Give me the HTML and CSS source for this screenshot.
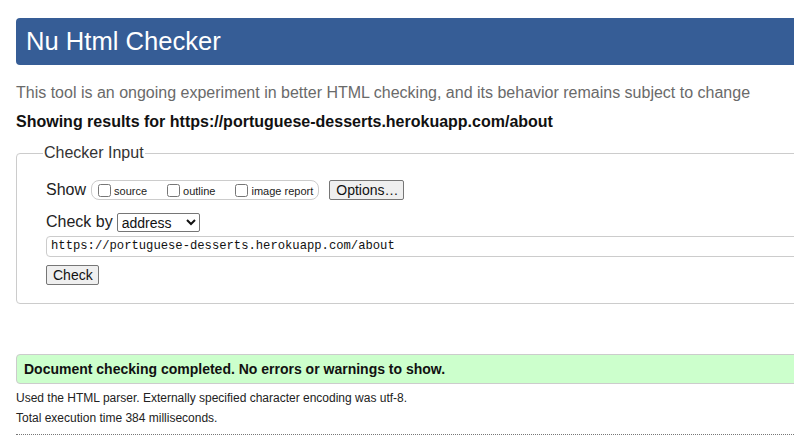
FILE: index.html
```html
<!DOCTYPE html>
<html>
<head>
<meta charset="utf-8">
<title>Nu Html Checker</title>
<link rel="stylesheet" href="styles.css">
</head>
<body>
<div class="page">
  <h1 class="banner">Nu Html Checker</h1>
  <p class="tagline">This tool is an ongoing experiment in better HTML checking, and its behavior remains subject to change</p>
  <p class="showing">Showing results for https://portuguese-desserts.herokuapp.com/about</p>
  <fieldset class="input-box">
    <legend class="legend">Checker Input</legend>
    <div class="row show-row">
      <span class="row-label">Show</span>
      <span class="opts">
        <label class="opt"><input type="checkbox" class="cb"><span>source</span></label>
        <label class="opt"><input type="checkbox" class="cb"><span>outline</span></label>
        <label class="opt last"><input type="checkbox" class="cb"><span>image report</span></label>
      </span>
      <button class="btn options-btn" type="button">Options…</button>
    </div>
    <div class="row by-row">
      <span class="row-label">Check by</span>
      <select class="sel"><option>address</option></select>
    </div>
    <div class="url">https://portuguese-desserts.herokuapp.com/about</div>
    <div class="row check-row">
      <button class="btn" type="button">Check</button>
    </div>
  </fieldset>
  <div class="success">Document checking completed. No errors or warnings to show.</div>
  <p class="details">Used the HTML parser. Externally specified character encoding was utf-8.</p>
  <p class="details second">Total execution time 384 milliseconds.</p>
  <hr class="dots">
</div>
</body>
</html>
```

FILE: styles.css
```css
html {
  overflow: hidden;
  background: #fff;
}
body {
  margin: 0;
  padding: 18px 0 0 16px;
  font-family: "Liberation Sans", Arial, sans-serif;
  color: #222;
}
.page {
  width: 900px;
}
.banner {
  margin: 0;
  height: 47px;
  line-height: 47px;
  padding: 0 10px;
  background: #365d96;
  color: #fff;
  font-size: 25.6px;
  font-weight: normal;
  border-radius: 4px;
}
.tagline {
  margin: 18px 0 0;
  font-size: 16px;
  line-height: 20px;
  color: #6a6a6a;
}
.showing {
  margin: 9px 0 0;
  font-size: 16px;
  line-height: 20px;
  font-weight: bold;
  color: #111;
}
.input-box {
  margin: 12px 0 0;
  padding: 18px 29px 18px;
  border: 1px solid #ccc;
  border-radius: 4px;
  min-width: 0;
}
.legend {
  font-size: 16px;
  line-height: 18px;
  padding: 0 1px;
  margin-left: -3px;
  color: #333;
}
.row {
  display: flex;
  align-items: center;
}
.row-label {
  font-size: 16px;
  color: #222;
}
.show-row {
  height: 20px;
}
.opts {
  display: flex;
  align-items: center;
  height: 18px;
  margin-left: 5px;
  padding: 0 5px 0 6px;
  border: 1px solid #ccc;
  border-radius: 8px;
}
.opt {
  display: flex;
  align-items: center;
  font-size: 11px;
  color: #222;
  margin-right: 20px;
}
.opt span {
  padding-top: 2px;
}
.opt.last {
  margin-right: 0;
}
.cb {
  width: 13px;
  height: 13px;
  margin: 0 3px 0 0;
}
.btn {
  font-family: "Liberation Sans", Arial, sans-serif;
  font-size: 14px;
  height: 20px;
  padding: 0 6px;
  border: 1px solid #767676;
  border-radius: 2px;
  background: #efefef;
  color: #111;
}
.options-btn {
  margin-left: 10px;
  width: 75px;
}
.by-row {
  margin-top: 12px;
  height: 20px;
}
.sel {
  margin-left: 4px;
  width: 83px;
  height: 19px;
  font-family: "Liberation Sans", Arial, sans-serif;
  font-size: 14px;
  border: 1px solid #767676;
  border-radius: 2px;
  background: #fff;
  color: #111;
  padding: 0;
}
.url {
  margin-top: 4px;
  height: 19px;
  line-height: 19px;
  border: 1px solid #ccc;
  border-radius: 4px;
  padding: 0 4px;
  font-family: "Liberation Mono", "DejaVu Sans Mono", monospace;
  font-size: 12.2px;
  color: #111;
}
.check-row {
  margin-top: 8px;
}
.check-row .btn {
  width: 53px;
}
.success {
  margin-top: 50px;
  height: 28px;
  line-height: 28px;
  border: 1px solid #ccc;
  border-radius: 4px;
  background: #ccffcc;
  padding: 0 7px;
  font-size: 14px;
  font-weight: bold;
  color: #111;
}
.details {
  margin: 6px 0 0;
  font-size: 12px;
  line-height: 16px;
  color: #222;
}
.details.second {
  margin-top: 4px;
}
.dots {
  margin: 8px 0 0;
  border: 0;
  border-top: 1px dotted #777;
  height: 0;
}
```
